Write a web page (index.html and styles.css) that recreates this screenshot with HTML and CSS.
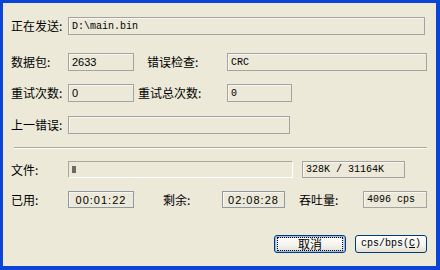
FILE: index.html
```html
<!DOCTYPE html>
<html>
<head>
<meta charset="utf-8">
<link rel="stylesheet" href="styles.css">
</head>
<body>
<div class="win">
  <div class="row h18">
    <span class="lbl w57">正在发送:</span>
    <div class="box mono" style="width:357px">D:\main.bin</div>
  </div>
  <div class="row h18 m18">
    <span class="lbl w57">数据包:</span>
    <div class="box sans" style="width:66px">2633</div>
    <span class="lbl" style="margin-left:13px;width:80px">错误检查:</span>
    <div class="box mono" style="width:200px">CRC</div>
  </div>
  <div class="row h18 m13">
    <span class="lbl w57">重试次数:</span>
    <div class="box sans" style="width:66px">0</div>
    <span class="lbl" style="margin-left:4px;width:89px">重试总次数:</span>
    <div class="box mono" style="width:65px">0</div>
  </div>
  <div class="row h18 m14">
    <span class="lbl w57">上一错误:</span>
    <div class="box" style="width:222px"></div>
  </div>
  <div class="sep"></div>
  <div class="row h17 m12">
    <span class="lbl w57">文件:</span>
    <div class="progress"><div class="chunk"></div></div>
    <div class="box mono" style="margin-left:9px;width:103px">328K / 31164K</div>
  </div>
  <div class="row h17 m13">
    <span class="lbl w57">已用:</span>
    <div class="box time" style="width:66px">00:01:22</div>
    <span class="lbl" style="margin-left:29px;width:59px">剩余:</span>
    <div class="box time" style="width:63px">02:08:28</div>
    <span class="lbl" style="margin-left:14px;width:64px">吞吐量:</span>
    <div class="box mono" style="width:64px">4096 cps</div>
  </div>
  <div class="buttons">
    <div class="btn default"><span class="focus">取消</span></div>
    <div class="btn mono">cps/bps(<u>C</u>)</div>
  </div>
</div>
</body>
</html>
```
FILE: styles.css
```css
html, body {
  margin: 0;
  padding: 0;
  background: #ece9d8;
}
.win {
  width: 440px;
  height: 270px;
  box-sizing: border-box;
  background: #ece9d8;
  border-style: solid;
  border-color: #0a45d8;
  border-width: 3px 4px 4px 3px;
  padding: 14px 9px 0 8px;
  font-family: "Noto Sans CJK SC", "Noto Sans", sans-serif;
  font-size: 12px;
  color: #000;
}
.row {
  display: flex;
  align-items: center;
}
.h18 { height: 18px; }
.h17 { height: 17px; }
.m18 { margin-top: 18px; }
.m13 { margin-top: 13px; }
.m14 { margin-top: 14px; }
.m12 { margin-top: 12px; }
.lbl {
  display: block;
  flex: none;
  line-height: 18px;
  white-space: nowrap;
}
.w57 { width: 57px; }
.box {
  flex: none;
  height: 100%;
  box-sizing: border-box;
  border: 1px solid #a3a3a3;
  box-shadow: inset 1px 1px 0 #f7f6f0;
  padding: 0 3px;
  display: flex;
  align-items: center;
  white-space: nowrap;
  overflow: hidden;
}
.mono {
  font-family: "Liberation Mono", monospace;
  font-size: 10px;
}
.sans {
  font-family: "Liberation Sans", sans-serif;
  font-size: 11px;
}
.time {
  font-family: "Liberation Sans", sans-serif;
  font-size: 11px;
  letter-spacing: 1px;
  justify-content: center;
  border-color: #8d9aa5;
}
.sep {
  width: 413px;
  margin-left: 3px;
  margin-top: 13px;
  border-top: 1px solid #aca899;
  border-bottom: 1px solid #fff;
}
.progress {
  flex: none;
  width: 225px;
  height: 100%;
  box-sizing: border-box;
  border-top: 1px solid #aca899;
  border-left: 1px solid #aca899;
  border-bottom: 1px solid #fff;
  border-right: 1px solid #fff;
  padding: 4px 3px;
}
.chunk {
  width: 4px;
  height: 7px;
  background: #6c6a66;
}
.buttons {
  display: flex;
  justify-content: flex-end;
  gap: 9px;
  margin-top: 27px;
}
.btn {
  width: 72px;
  height: 18px;
  box-sizing: border-box;
  border: 1px solid #003c74;
  border-radius: 3px;
  background: linear-gradient(#ffffff, #f3f2ec 60%, #e3e0d4);
  display: flex;
  align-items: center;
  justify-content: center;
  line-height: 14px;
}
.btn.default {
  box-shadow: inset 0 0 0 1px #9bb6e8, inset 0 0 0 2px #c9d8f4;
}
.focus {
  display: block;
  width: 64px;
  height: 12px;
  line-height: 12px;
  text-align: center;
  outline: 1px dotted #000;
}
```
